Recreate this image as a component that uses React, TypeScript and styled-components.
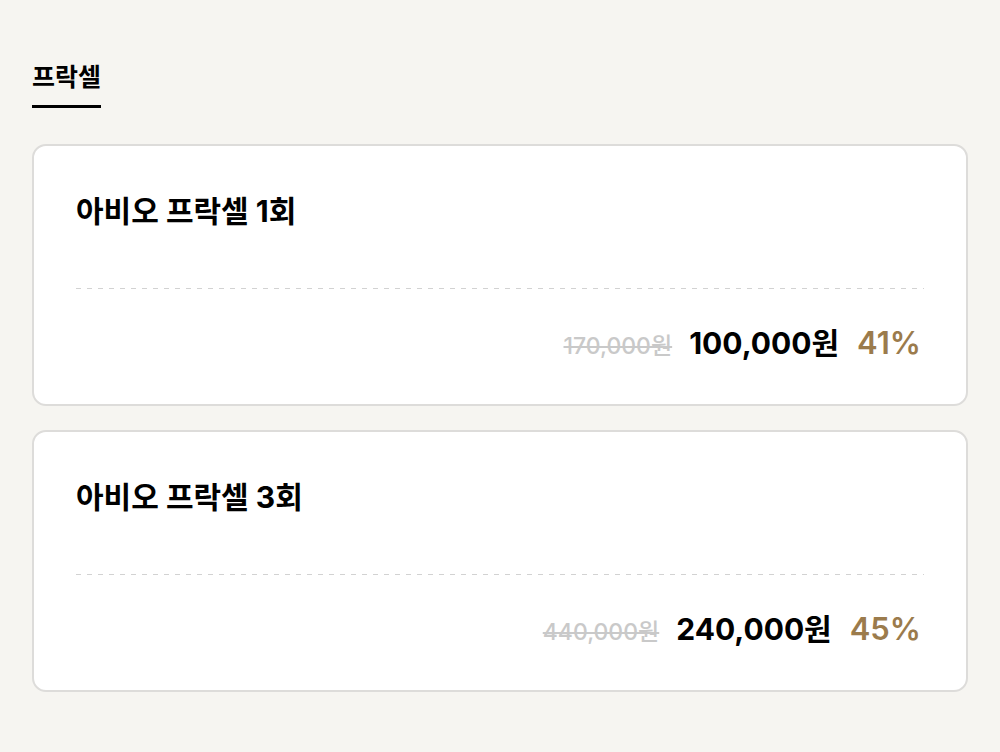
import styled, {createGlobalStyle} from "styled-components";

const GlobalStyle = createGlobalStyle`
    html, body {
        margin: 0;
        padding: 0;
        background: #f6f5f1;
    }
    body {
        font-family: Inter, "Noto Sans CJK KR", sans-serif;
        color: #000;
    }
`;

interface Product {
    name: string;
    original: string;
    price: string;
    discount: string;
}

const products: Product[] = [
    {name: "아비오 프락셀 1회", original: "170,000원", price: "100,000원", discount: "41%"},
    {name: "아비오 프락셀 3회", original: "440,000원", price: "240,000원", discount: "45%"},
];

export default function App() {
    return <Page>
        <GlobalStyle />
        <Tabs>
            <Tab $active>프락셀</Tab>
        </Tabs>
        <CardList>
            {products.map(p => (
                <Card key={p.name}>
                    <CardTitle>{p.name}</CardTitle>
                    <Divider />
                    <PriceRow>
                        <OriginalPrice>{p.original}</OriginalPrice>
                        <SalePrice>{p.price}</SalePrice>
                        <Discount>{p.discount}</Discount>
                    </PriceRow>
                </Card>
            ))}
        </CardList>
    </Page>
}

const Page = styled.div`
    width: 1000px;
    min-height: 752px;
    box-sizing: border-box;
    padding: 62px 32px 40px;
`;

const Tabs = styled.div`
    display: flex;
    gap: 24px;
`;

const Tab = styled.div<{$active?: boolean}>`
    font-size: 25px;
    line-height: 30px;
    font-weight: 700;
    padding-bottom: 13px;
    border-bottom: 3px solid ${props => props.$active ? "#000" : "transparent"};
`;

const CardList = styled.div`
    display: flex;
    flex-direction: column;
    gap: 24px;
    margin-top: 36px;
`;

const Card = styled.div`
    background: #fff;
    border: 2px solid #dddcda;
    border-radius: 14px;
    padding: 47px 42px 40px;
`;

const CardTitle = styled.div`
    font-size: 30px;
    line-height: 36px;
    font-weight: 700;
`;

const Divider = styled.div`
    height: 1px;
    margin-top: 59px;
    background-image: linear-gradient(to right, #d2d2d2 0 5px, transparent 5px 11px);
    background-size: 11px 1px;
    background-repeat: repeat-x;
`;

const PriceRow = styled.div`
    display: flex;
    justify-content: flex-end;
    align-items: baseline;
    margin-top: 36px;
    line-height: 36px;
    padding-right: 3px;
`;

const OriginalPrice = styled.span`
    font-size: 23px;
    font-weight: 500;
    color: #c9c9c9;
    text-decoration: line-through;
    margin-right: 17px;
`;

const SalePrice = styled.span`
    font-size: 30px;
    font-weight: 700;
    color: #000;
    margin-right: 18px;
`;

const Discount = styled.span`
    font-size: 31px;
    font-weight: 600;
    color: #9b7b4c;
`;
